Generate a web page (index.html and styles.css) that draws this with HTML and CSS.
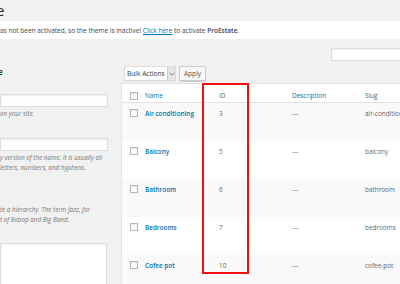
FILE: index.html
```html
<!DOCTYPE html>
<html lang="en">
<head>
    <meta charset="UTF-8">
    <title>Features</title>
    <link rel="stylesheet" href="styles.css">
</head>
<body>
<h1 class="page-title"><span>e</span></h1>
<div class="notice">as not been activated, so the theme is inactive! <a href="#">Click here</a> to activate <strong>ProEstate</strong>.</div>
<div class="search-row">
    <input type="search" class="search-box">
</div>
<div class="columns">
    <div class="col-left">
        <h2 class="form-title"><span>e</span></h2>
        <div class="field">
            <input type="text" class="text-input">
            <p class="desc">on your site.</p>
        </div>
        <div class="field">
            <input type="text" class="text-input slug-input">
            <p class="desc">y version of the name. It is usually all<br>letters, numbers, and hyphens.</p>
        </div>
        <p class="desc parent-desc">te a hierarchy. The term Jazz, for<br>t of Bebop and Big Band.</p>
        <textarea class="text-area"></textarea>
    </div>
    <div class="col-right">
        <div class="tablenav">
            <div class="bulk-select">
                <span>Bulk Actions</span>
                <span class="select-arrow">
                    <svg width="6" height="4" viewBox="0 0 6 4"><path d="M0.5 0.8 L3 3.2 L5.5 0.8" fill="none" stroke="#777" stroke-width="0.9"/></svg>
                </span>
            </div>
            <button class="apply-btn">Apply</button>
        </div>
        <div class="table-wrap">
            <div class="row head">
                <div class="cb"><span class="check"></span></div>
                <div class="cell"><a href="#">Name</a></div>
                <div class="cell id-head">ID</div>
                <div class="cell"><a href="#">Description</a></div>
                <div class="cell"><a href="#">Slug</a></div>
            </div>
            <div class="row alt">
                <div class="cb"><span class="check"></span></div>
                <div class="cell"><a href="#" class="row-title">Air conditioning</a></div>
                <div class="cell">3</div>
                <div class="cell dash">—</div>
                <div class="cell">air-conditioning</div>
            </div>
            <div class="row">
                <div class="cb"><span class="check"></span></div>
                <div class="cell"><a href="#" class="row-title">Balcony</a></div>
                <div class="cell">5</div>
                <div class="cell dash">—</div>
                <div class="cell">balcony</div>
            </div>
            <div class="row alt">
                <div class="cb"><span class="check"></span></div>
                <div class="cell"><a href="#" class="row-title">Bathroom</a></div>
                <div class="cell">6</div>
                <div class="cell dash">—</div>
                <div class="cell">bathroom</div>
            </div>
            <div class="row">
                <div class="cb"><span class="check"></span></div>
                <div class="cell"><a href="#" class="row-title">Bedrooms</a></div>
                <div class="cell">7</div>
                <div class="cell dash">—</div>
                <div class="cell">bedrooms</div>
            </div>
            <div class="row alt">
                <div class="cb"><span class="check"></span></div>
                <div class="cell"><a href="#" class="row-title">Cofee pot</a></div>
                <div class="cell">10</div>
                <div class="cell dash">—</div>
                <div class="cell">cofee-pot</div>
            </div>
            <div class="highlight"></div>
        </div>
    </div>
</div>
</body>
</html>
```

FILE: styles.css
```css
* {
    margin: 0;
    padding: 0;
    box-sizing: border-box;
    font-family: 'Open Sans', sans-serif;
}

body {
    width: 400px;
    height: 284px;
    overflow: hidden;
    background: #f1f1f1;
    color: #444;
}

.page-title {
    height: 21px;
    font-size: 15px;
    line-height: 20px;
    font-weight: 400;
    color: #23282d;
}

.page-title span {
    margin-left: -4px;
}

.notice {
    height: 18px;
    background: #fff;
    font-size: 6.5px;
    line-height: 19px;
    color: #444;
    white-space: nowrap;
}

.notice a {
    color: #0073aa;
}

.notice strong {
    font-weight: 600;
}

.search-row {
    display: flex;
    justify-content: flex-end;
    margin-top: 9px;
    margin-right: -12px;
}

.search-box {
    width: 81px;
    height: 13px;
    border: 1px solid #ddd;
    background: #fff;
    box-shadow: inset 0 1px 2px rgba(0, 0, 0, 0.07);
}

.columns {
    display: flex;
    gap: 13px;
}

.col-left {
    width: 108px;
    flex-shrink: 0;
}

.form-title {
    margin-top: 6px;
    font-size: 8px;
    line-height: 10px;
    font-weight: 600;
    color: #23282d;
}

.form-title span {
    margin-left: -2px;
}

.field {
    margin-top: 17px;
}

.field + .field {
    margin-top: 19px;
}

.text-input {
    display: block;
    width: 108px;
    height: 13px;
    border: 1px solid #ddd;
    background: #fff;
    box-shadow: inset 0 1px 2px rgba(0, 0, 0, 0.07);
}

.desc {
    margin-top: 2px;
    font-size: 6.3px;
    line-height: 10px;
    font-style: italic;
    color: #777;
    white-space: nowrap;
}

.parent-desc {
    margin-top: 32px;
}

.text-area {
    display: block;
    margin-top: 18px;
    width: 107px;
    height: 60px;
    border: 1px solid #ddd;
    background: #fff;
    resize: none;
    box-shadow: inset 0 1px 2px rgba(0, 0, 0, 0.07);
}

.col-right {
    flex: 1;
    padding-top: 5px;
}

.tablenav {
    display: flex;
    gap: 3px;
    margin-left: 3px;
    height: 15px;
}

.bulk-select {
    display: flex;
    align-items: center;
    justify-content: space-between;
    width: 52px;
    height: 15px;
    padding-left: 2px;
    border: 1px solid #ddd;
    background: #fff;
    font-size: 6.6px;
    color: #32373c;
    box-shadow: 0 1px 1px rgba(0, 0, 0, 0.04);
}

.select-arrow {
    display: flex;
    align-items: center;
    justify-content: center;
    width: 8px;
    height: 13px;
    background: #e6e6e6;
    border-left: 1px solid #ccc;
}

.apply-btn {
    width: 27px;
    height: 15px;
    border: 1px solid #ccc;
    border-radius: 2px;
    background: #f7f7f7;
    color: #555;
    font-size: 6.6px;
    box-shadow: 0 1px 0 #ccc;
}

.table-wrap {
    position: relative;
    margin-top: 2px;
    width: 300px;
    background: #fff;
    border: 1px solid #e5e5e5;
    border-right: none;
}

.row {
    display: grid;
    grid-template-columns: 23px 74px 73px 73px 1fr;
    height: 38px;
    padding-top: 6px;
    font-size: 6.4px;
    line-height: 9px;
    color: #555;
}

.row.head {
    height: 19px;
    padding-top: 7px;
    border-bottom: 1px solid #e1e1e1;
}

.row.alt {
    background: #f9f9f9;
}

.cb {
    padding-left: 8px;
}

.check {
    display: block;
    width: 8px;
    height: 8px;
    border: 1px solid #b4b9be;
    background: #fff;
    box-shadow: inset 0 1px 2px rgba(0, 0, 0, 0.1);
}

.head .check {
    margin-top: 1px;
}

.row a {
    color: #0073aa;
    text-decoration: none;
}

.row-title {
    font-weight: 600;
}

.id-head {
    color: #32373c;
}

.cell {
    white-space: nowrap;
    color: #666;
}

.dash {
    color: #888;
}

.highlight {
    position: absolute;
    left: 80px;
    top: -1px;
    width: 47px;
    height: 191px;
    border: 2px solid #f01010;
}
```
